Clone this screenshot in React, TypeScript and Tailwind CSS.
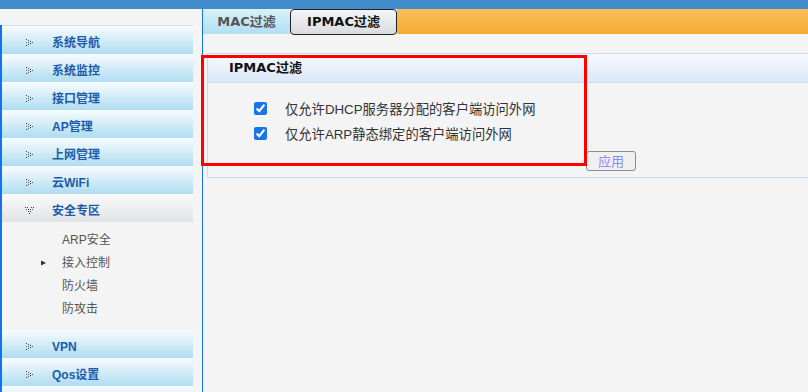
import React from "react";

const menuTop = ["系统导航", "系统监控", "接口管理", "AP管理", "上网管理", "云WiFi"];
const menuBottom = ["VPN", "Qos设置"];
const subItems = ["ARP安全", "接入控制", "防火墙", "防攻击"];

// stippled ">" bullet used by the collapsed menu groups
const DotArrow = () => (
  <svg width="8" height="8" viewBox="0 0 8 8" className="shrink-0">
    <rect x="0" y="0" width="1" height="1" fill="#333" />
    <rect x="2" y="1" width="1" height="1" fill="#555" />
    <rect x="4" y="2" width="1" height="1" fill="#333" />
    <rect x="6" y="3" width="1" height="1" fill="#444" />
    <rect x="4" y="4" width="1" height="1" fill="#333" />
    <rect x="2" y="5" width="1" height="1" fill="#555" />
    <rect x="0" y="6" width="1" height="1" fill="#333" />
    <rect x="0" y="3" width="1" height="1" fill="#777" />
    <rect x="2" y="3" width="1" height="1" fill="#666" />
  </svg>
);

// stippled "v" bullet for the expanded group
const DotDown = () => (
  <svg width="10" height="7" viewBox="0 0 10 7" className="shrink-0">
    <rect x="0" y="0" width="1" height="1" fill="#333" />
    <rect x="2" y="0" width="1" height="1" fill="#444" />
    <rect x="6" y="0" width="1" height="1" fill="#444" />
    <rect x="8" y="0" width="1" height="1" fill="#333" />
    <rect x="1" y="2" width="1" height="1" fill="#555" />
    <rect x="3" y="2" width="1" height="1" fill="#333" />
    <rect x="5" y="2" width="1" height="1" fill="#333" />
    <rect x="7" y="2" width="1" height="1" fill="#555" />
    <rect x="3" y="4" width="1" height="1" fill="#444" />
    <rect x="5" y="4" width="1" height="1" fill="#444" />
    <rect x="4" y="6" width="1" height="1" fill="#333" />
  </svg>
);

const MenuItem = ({ label }: { label: string }) => (
  <div className="flex h-[28px] items-center bg-linear-to-b from-[#f8fcfe] to-[#aedcf1] pl-[24px] pt-[5px]">
    <DotArrow />
    <span className="ml-[18px] text-[12px] font-bold text-[#1c5bab]">{label}</span>
  </div>
);

export default function App() {
  return (
    <div className="relative h-[392px] w-[808px] overflow-hidden bg-[#f4f4f4] font-['Liberation_Sans','Noto_Sans_CJK_SC',sans-serif]">
      <div className="h-[9px] bg-[#428bca]" />

      <div className="flex h-[383px]">
        {/* Left menu */}
        <aside className="w-[202px] shrink-0 pt-[16px]">
          <div className="h-full border-l-2 border-[#1273eb]">
            <div className="w-[191px] border-t border-[#cde1f2]">
              {menuTop.map((m) => (
                <MenuItem key={m} label={m} />
              ))}

              <div className="flex h-[28px] items-center bg-linear-to-b from-[#fafafa] to-[#e1e3e5] pl-[23px] pt-[5px]">
                <DotDown />
                <span className="ml-[17px] text-[12px] font-bold text-[#1c5bab]">安全专区</span>
              </div>

              <div className="pb-[10px] pt-[6px]">
                {subItems.map((s) => (
                  <div key={s} className="flex h-[23px] items-center pl-[39px]">
                    <span className="flex w-[21px] items-center">
                      {s === "接入控制" && (
                        <svg width="6" height="6" viewBox="0 0 6 6">
                          <path d="M0 0.5 L5 3 L0 5.5 Z" fill="#333" />
                        </svg>
                      )}
                    </span>
                    <span className="text-[12px] text-[#555]">{s}</span>
                  </div>
                ))}
              </div>

              {menuBottom.map((m) => (
                <MenuItem key={m} label={m} />
              ))}
              {/* next group, cut off by the window edge */}
              <div className="h-[28px] bg-linear-to-b from-[#f8fcfe] to-[#aedcf1]" />
            </div>
          </div>
        </aside>

        {/* Main frame */}
        <main className="flex-1 border-l border-[#1273eb]">
          <div className="flex h-[25px] font-['DejaVu_Sans','Noto_Sans_CJK_SC',sans-serif]">
            <div className="flex w-[87px] items-center justify-center bg-linear-to-b from-[#daf1fa] to-[#b0dff3] text-[13px] font-bold text-[#555]">
              MAC过滤
            </div>
            <div className="relative z-10 flex h-[26px] w-[107px] items-center justify-center rounded-[4px] border-[1.5px] border-[#222] bg-linear-to-b from-[#f3f4f5] to-[#dadde0] text-[13px] font-bold text-[#111]">
              IPMAC过滤
            </div>
            <div className="flex-1 bg-linear-to-b from-[#f9be5a] to-[#f5ab30]" />
          </div>

          <div className="ml-[4px] mt-[19px] border border-r-0 border-[#c8dcef]">
            <div className="flex h-[29px] items-center border-b border-[#c8dcef] bg-linear-to-b from-[#f6faff] to-[#dbe8f8] pl-[21px] font-['DejaVu_Sans','Noto_Sans_CJK_SC',sans-serif] text-[13px] font-bold text-[#111]">
              IPMAC过滤
            </div>
            <div className="pb-[6px] pt-[13px]">
              {["仅允许DHCP服务器分配的客户端访问外网", "仅允许ARP静态绑定的客户端访问外网"].map((t) => (
                <label key={t} className="flex h-[25px] items-center pl-[46px]">
                  <input type="checkbox" checked readOnly className="size-[13px] accent-[#1a73e8]" />
                  <span className="ml-[18px] pt-[2px] text-[13.3px] text-[#333]">{t}</span>
                </label>
              ))}
              <button className="ml-[378px] mt-[5px] flex h-[20px] w-[50px] items-center justify-center rounded-[3px] border border-[#8c8c8c] bg-[#f0f0f0] text-[13px] leading-none text-[#8a8aff]">
                应用
              </button>
            </div>
          </div>
        </main>
      </div>

      {/* red annotation box */}
      <div className="pointer-events-none absolute left-[201px] top-[55px] h-[111px] w-[386px] border-[3px] border-[#ff0000]" />
    </div>
  );
}
